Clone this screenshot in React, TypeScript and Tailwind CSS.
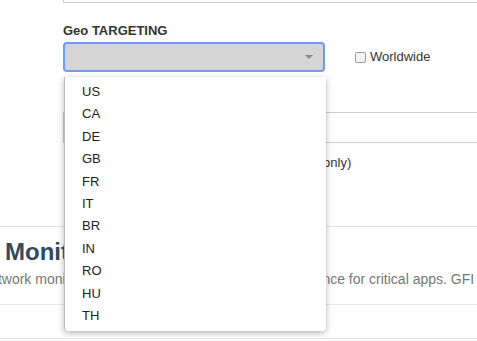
const countries = ["US", "CA", "DE", "GB", "FR", "IT", "BR", "IN", "RO", "HU", "TH"];

export default function App() {
  return (
    <div className="relative w-[477px] h-[341px] overflow-hidden bg-white font-['Liberation_Sans',Arial,sans-serif] text-[#333]">
      <div className="pl-[63px]">
        {/* bottom edge of the field above */}
        <div className="h-[3px] border-l border-b border-[#ccc]" />

        <div className="mt-[20px] text-[13px] font-bold leading-[16px]">Geo TARGETING</div>

        <div className="mt-[3px] flex items-center">
          <div className="w-[262px] h-[30px] rounded-[4px] border-2 border-[#7099f2] bg-[#d5d5d5] flex items-center justify-end pr-[10px]">
            <div className="w-0 h-0 border-l-[4px] border-r-[4px] border-t-[4px] border-l-transparent border-r-transparent border-t-[#8a8a8a]" />
          </div>
          <label className="ml-[30px] flex items-center gap-[4px] text-[13px]">
            <span className="w-[11px] h-[11px] rounded-[2px] border border-[#9a9a9a] bg-[#f4f4f4]" />
            Worldwide
          </label>
        </div>

        <div className="mt-[40px] h-[31px] border-l border-y border-[#ccc]" />

        <div className="mt-[12px] text-[13px] leading-[16px] pl-[18px] whitespace-nowrap">
          <span>Limit ad impressions per visitor (desktops only)</span>
        </div>
      </div>

      <div className="mt-[55px] border-t border-[#e6e6e6]" />

      <div className="pt-[10px] pl-[5px] whitespace-nowrap">
        <div className="text-[24px] font-bold leading-[30px] text-[#34495e]">Monitor</div>
        <div className="mt-[3px] -ml-[25px] text-[14px] leading-[18px] text-[#777]">
          Network monitoring that ensures uptime&nbsp;&nbsp; and performance for critical apps. GFI LanGuard
        </div>
      </div>

      <div className="mt-[16px] border-t border-[#e6e6e6]" />
      <div className="mt-[33px] border-t border-[#e6e6e6]" />

      {/* open dropdown */}
      <div className="absolute left-[64px] top-[77px] w-[262px] rounded-b-[4px] bg-white pt-[4px] pb-[4px] shadow-[0_2px_6px_rgba(0,0,0,0.3)] border-l border-[#bbb]">
        {countries.map((c) => (
          <div key={c} className="h-[22.4px] leading-[22.4px] pl-[17px] text-[13px] text-[#222]">
            {c}
          </div>
        ))}
      </div>
    </div>
  );
}
